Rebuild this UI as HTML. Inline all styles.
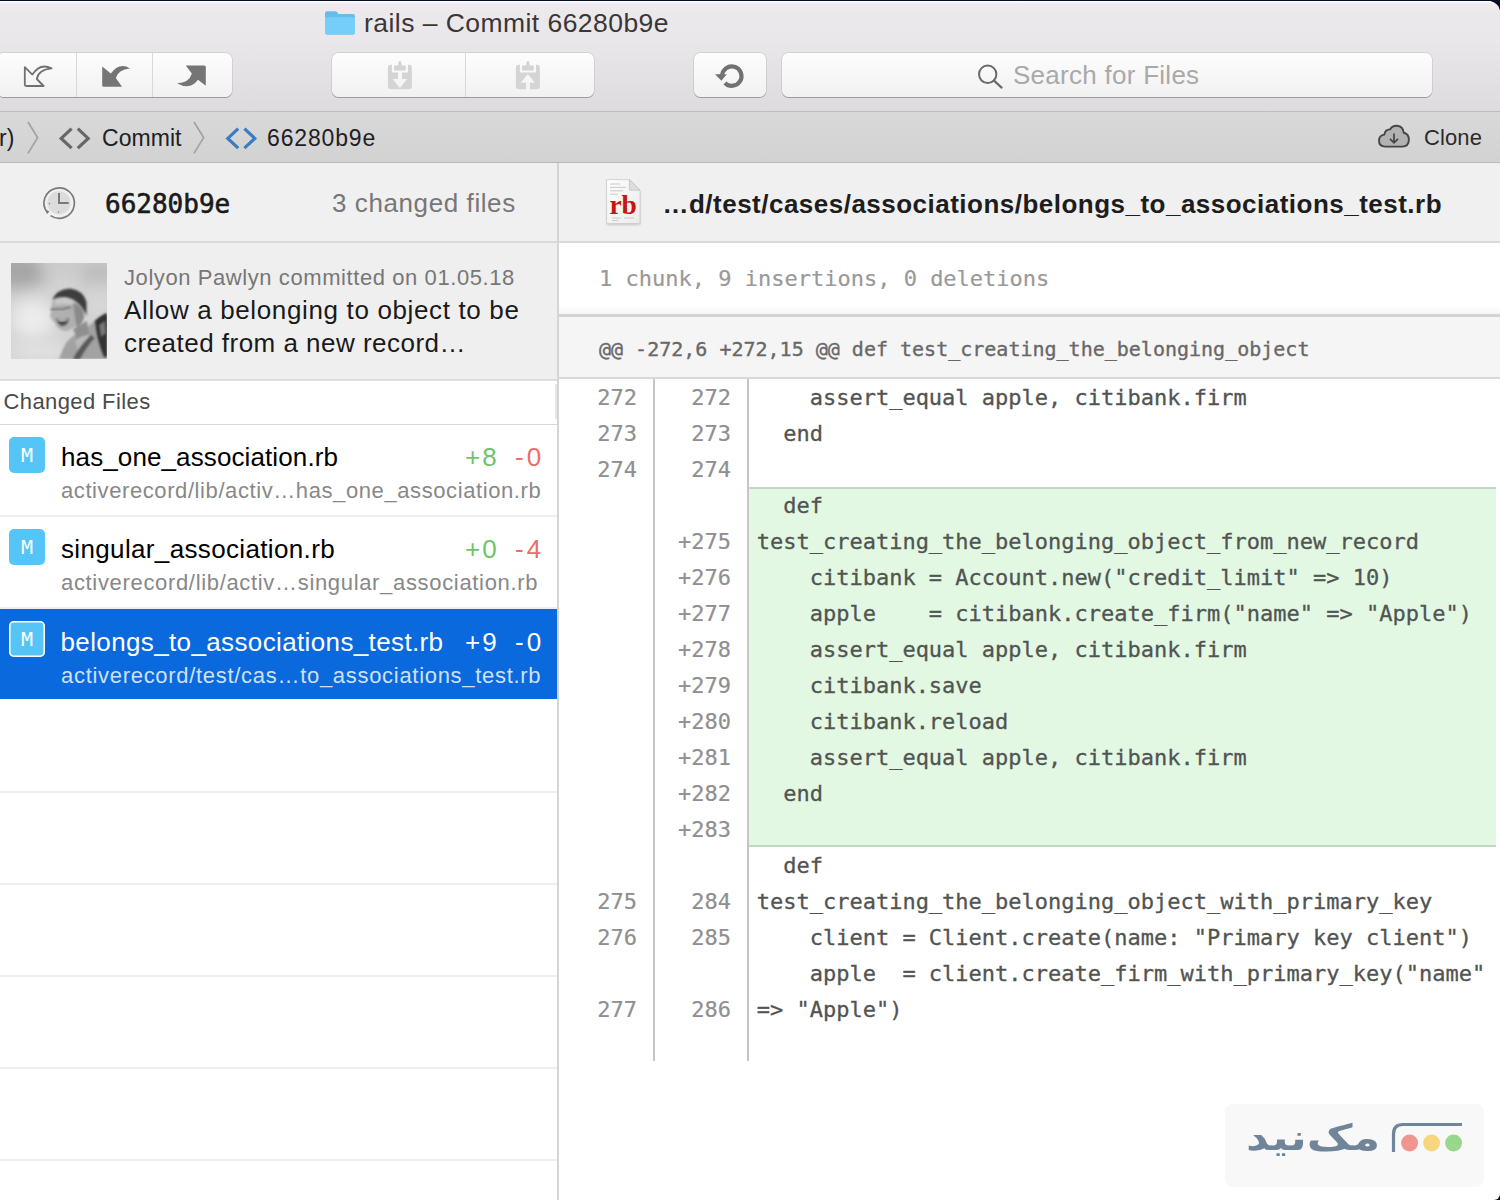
<!DOCTYPE html>
<html lang="en">
<head>
<meta charset="utf-8">
<title>rails – Commit 66280b9e</title>
<style>
*{box-sizing:border-box;margin:0;padding:0}
html,body{width:1500px;height:1200px;overflow:hidden;background:#070e24}
body{position:relative;font-family:"Liberation Sans",sans-serif;color:#222}
.abs{position:absolute}
.t{position:absolute;white-space:pre;line-height:1}
.mono{font-family:"DejaVu Sans Mono","Liberation Mono",monospace}
#win{position:absolute;left:0;top:1px;width:1500px;height:1199px;background:#fff;border-radius:0 12px 6px 0;overflow:hidden}
#chrome{position:absolute;left:0;top:1px;width:1500px;height:110px;background:linear-gradient(#fff 0,#fff 1px,#eeeef6 2px,#f0eaec 5px,#ece9ec 10px,#e9e7e9 40px,#dddbdd 110px)}
#chromeline{position:absolute;left:0;top:111px;width:1500px;height:2px;background:linear-gradient(#bfbdbf 50%,#d0ced0 50%)}
#crumb{position:absolute;left:0;top:112px;width:1500px;height:50px;background:linear-gradient(#dad9da,#d3d2d3)}
#crumbline{position:absolute;left:0;top:162px;width:1500px;height:1px;background:#b9b8b9}
.btn{position:absolute;top:53px;height:44px;background:linear-gradient(#fefdfe,#f2f1f2);border-radius:6.5px;box-shadow:0 0 0 .7px rgba(0,0,0,.12),0 .8px .6px rgba(0,0,0,.3)}
.sep{position:absolute;top:0;width:1px;height:44px;background:#d9d7d9}
.badge{width:36px;height:36px;border-radius:5px;background:#54c5f6;color:#fff;font-size:20px;line-height:36px;text-align:center}
.ln{position:absolute;width:71px;height:36px;line-height:38px;text-align:right;white-space:pre;font-family:"DejaVu Sans Mono","Liberation Mono",monospace;font-size:22px;color:#8f8f8f;-webkit-text-stroke:.2px #8f8f8f}
.cd{position:absolute;left:756.7px;height:36px;line-height:38px;white-space:pre;font-family:"DejaVu Sans Mono","Liberation Mono",monospace;font-size:22px;color:#515452;-webkit-text-stroke:.3px #515452}
</style>
</head>
<body>
<div id="win"><div id="inner" class="abs" style="left:0;top:-1px;width:1500px;height:1200px">
<div id="chrome"></div>
<div id="chromeline"></div>
<div id="crumb"></div>
<div id="crumbline"></div>
<!--TOOLBAR-->
<svg class="abs" style="left:324px;top:10px" width="32" height="26" viewBox="0 0 32 26">
<path d="M1 3.2 Q1 1.2 3 1.2 L11.2 1.2 Q12.6 1.2 13.4 2.4 L14.6 4 L29 4 Q31 4 31 6 L31 22.6 Q31 24.6 29 24.6 L3 24.6 Q1 24.6 1 22.6 Z" fill="#69bcea"/>
<path d="M1 7.2 L31 7.2 L31 22.6 Q31 24.6 29 24.6 L3 24.6 Q1 24.6 1 22.6 Z" fill="#74cef9"/>
</svg>
<div class="t" style="left:364px;top:10px;font-size:26.5px;letter-spacing:.45px;color:#3a3636">rails – Commit 66280b9e</div>
<div class="btn" style="left:-3px;width:235px">
<div class="sep" style="left:79px"></div><div class="sep" style="left:155px"></div>
</div>
<svg class="abs" style="left:0;top:52px" width="240" height="46" viewBox="0 52 240 46">
<path d="M24.8 67.2 L24.8 84.5 Q24.8 86 26.3 86 L43.6 86 L36.8 79 Q38.5 69.5 51.6 68.4 Q40 62.5 32.4 74.6 Z" fill="none" stroke="#707070" stroke-width="1.8" stroke-linejoin="round"/>
<path d="M102.2 66.6 L102.2 85.3 Q102.2 86.8 103.7 86.8 L122 86.8 L115.8 78 Q118 69.6 130 68.4 Q119.5 62 110.8 73.6 Z" fill="#757575"/>
<path d="M185.8 65.4 L204.3 65.4 Q205.8 65.4 205.8 66.9 L205.8 85.8 L198 79.8 Q190 90.6 177 83.2 Q189.4 82.6 191.8 73.4 Z" fill="#757575"/>
</svg>
<div class="btn" style="left:332px;width:262px"><div class="sep" style="left:133px"></div></div>
<svg class="abs" style="left:380px;top:52px" width="170" height="46" viewBox="380 52 170 46">
<g fill="#d5d4d5">
<path d="M390.9 64.7 L391.9 64.7 L391.9 72.4 L398 72.4 L398 79 L392.6 79 L399.9 88 L407.1 79 L402 79 L402 72.4 L408 72.4 L408 64.7 L408.9 64.7 Q411.9 64.7 411.9 67.7 L411.9 86.3 Q411.9 89.3 408.9 89.3 L390.9 89.3 Q387.9 89.3 387.9 86.3 L387.9 67.7 Q387.9 64.7 390.9 64.7 Z"/>
<path d="M394 65.5 L398.3 65.5 L398.3 62.5 Q398.3 61 399.9 61 Q401.5 61 401.5 62.5 L401.5 65.5 L405.7 65.5 L405.7 70.6 L394 70.6 Z"/>
<path d="M518.9 64.7 L519.9 64.7 L519.9 72.4 L536 72.4 L536 64.7 L536.9 64.7 Q539.9 64.7 539.9 67.7 L539.9 86.3 Q539.9 89.3 536.9 89.3 L530 89.3 L530 82.7 L534.9 82.7 L527.9 74.1 L520.6 82.7 L526 82.7 L526 89.3 L518.9 89.3 Q515.9 89.3 515.9 86.3 L515.9 67.7 Q515.9 64.7 518.9 64.7 Z"/>
<path d="M522 65.5 L526.3 65.5 L526.3 62.5 Q526.3 61 527.9 61 Q529.5 61 529.5 62.5 L529.5 65.5 L533.7 65.5 L533.7 70.6 L522 70.6 Z"/>
</g>
</svg>
<div class="btn" style="left:694px;width:72px"></div>
<svg class="abs" style="left:700px;top:52px" width="60" height="46" viewBox="700 52 60 46">
<path d="M722.1 76 A9.7 9.7 0 1 1 724.9 82.9" fill="none" stroke="#717171" stroke-width="4.2"/>
<path d="M715 74.2 L726.8 74.2 L721.4 80.8 Z" fill="#717171"/>
</svg>
<div class="btn" style="left:782px;width:650px"></div>
<svg class="abs" style="left:975px;top:62px" width="32" height="30" viewBox="975 62 32 30">
<circle cx="987.7" cy="74.3" r="8.7" fill="none" stroke="#6a6a6a" stroke-width="2"/>
<path d="M994 80.6 L1001.6 87.6" stroke="#6a6a6a" stroke-width="2.2" stroke-linecap="round"/>
</svg>
<div class="t" style="left:1013px;top:62px;font-size:26px;letter-spacing:.27px;color:#a9a9a9">Search for Files</div>
<!--CRUMBS-->
<div class="t" style="left:-1px;top:127px;font-size:23px;color:#202024">r)</div>
<svg class="abs" style="left:20px;top:116px" width="250" height="44" viewBox="20 116 250 44">
<path d="M28 122 L37.6 137.6 L28 153.4" fill="none" stroke="#a4a3a4" stroke-width="1.8"/>
<path d="M194 122 L203.6 137.6 L194 153.4" fill="none" stroke="#a4a3a4" stroke-width="1.8"/>
<path d="M71.6 128.6 L61.2 138.4 L71.6 148.2 M77.8 128.6 L88.2 138.4 L77.8 148.2" fill="none" stroke="#676767" stroke-width="3.2"/>
<path d="M238.2 128.6 L227.8 138.4 L238.2 148.2 M244.4 128.6 L254.8 138.4 L244.4 148.2" fill="none" stroke="#3a7cc3" stroke-width="3.2"/>
</svg>
<div class="t" style="left:102px;top:127px;font-size:23px;letter-spacing:.05px;color:#202024">Commit</div>
<div class="t" style="left:267px;top:127px;font-size:23px;letter-spacing:.84px;color:#202024">66280b9e</div>
<svg class="abs" style="left:1374px;top:120px" width="40" height="32" viewBox="1374 120 40 32">
<path d="M1385.2 146.6 Q1379 146.6 1379 140.6 Q1379 135.4 1384.4 134.6 Q1385 129.6 1390 129.4 Q1392.4 125.6 1397 125.8 Q1403 126.4 1403.8 132.8 Q1409 134 1408.9 140 Q1408.6 146.6 1402.4 146.6 Z" fill="#b3b2b3" stroke="#454545" stroke-width="1.9" stroke-linejoin="round"/>
<path d="M1394 133.6 L1394 142.4 M1390 138.8 L1394 142.8 L1398 138.8" fill="none" stroke="#454545" stroke-width="1.7"/>
</svg>
<div class="t" style="left:1424px;top:127px;font-size:22px;letter-spacing:.1px;color:#2b2b2b">Clone</div>
<!--LEFT-->
<div class="abs" style="left:0;top:163px;width:1500px;height:78px;background:#f0f0f0"></div>
<div class="abs" style="left:0;top:241px;width:1500px;height:2px;background:#dadada"></div>
<div class="abs" style="left:0;top:243px;width:557px;height:136px;background:#efefef"></div>
<div class="abs" style="left:0;top:379px;width:557px;height:2px;background:linear-gradient(#d6d6d6,#e6e6e6)"></div>
<div class="abs" style="left:555px;top:384px;width:2px;height:35px;background:#e6e6e6"></div>
<svg class="abs" style="left:40px;top:184px" width="38" height="38" viewBox="40 184 38 38">
<circle cx="59" cy="202.9" r="11.6" fill="#dcdcdc"/>
<path d="M50.6 215.6 A15.2 15.2 0 1 0 47.2 212.4" fill="none" stroke="#7a7a7a" stroke-width="1.7"/>
<path d="M45.9 209.6 L49.4 211.6 L47 214.2 Z" fill="#7a7a7a"/>
<path d="M59 193.1 L59 202.9 L68.7 202.9" fill="none" stroke="#7a7a7a" stroke-width="2"/>
<circle cx="49.5" cy="203.6" r=".8" fill="#888"/><circle cx="58.6" cy="212" r=".8" fill="#888"/>
</svg>
<div class="t mono" style="left:105px;top:191px;font-size:26px;color:#1a1a1a;-webkit-text-stroke:.6px #1a1a1a">66280b9e</div>
<div class="t" style="left:332px;top:190px;font-size:26px;letter-spacing:.59px;color:#777">3 changed files</div>
<svg class="abs" style="left:11px;top:263px" width="96" height="96" viewBox="0 0 96 96">
<defs>
<filter id="b3" x="-30%" y="-30%" width="160%" height="160%"><feGaussianBlur stdDeviation="3"/></filter>
<filter id="b1" x="-30%" y="-30%" width="160%" height="160%"><feGaussianBlur stdDeviation="1.2"/></filter>
<filter id="b8" x="-50%" y="-50%" width="200%" height="200%"><feGaussianBlur stdDeviation="8"/></filter>
<clipPath id="av"><rect width="96" height="96"/></clipPath>
</defs>
<g clip-path="url(#av)">
<rect width="96" height="96" fill="#d2d2d2"/>
<ellipse cx="6" cy="8" rx="30" ry="18" fill="#a6a6a6" filter="url(#b8)"/>
<ellipse cx="52" cy="2" rx="22" ry="8" fill="#c9c9c9" filter="url(#b8)"/>
<ellipse cx="88" cy="10" rx="20" ry="14" fill="#bdbdbd" filter="url(#b8)"/>
<ellipse cx="22" cy="56" rx="22" ry="20" fill="#ececec" filter="url(#b8)"/>
<ellipse cx="28" cy="88" rx="32" ry="10" fill="#e2e2e2" filter="url(#b8)"/>
<ellipse cx="88" cy="40" rx="10" ry="14" fill="#d8d8d8" filter="url(#b8)"/>
<path d="M48 96 L52 86 Q56 76 64 72 L74 66 L86 56 L96 51 L96 96 Z" fill="#a2a2a2" filter="url(#b1)"/>
<path d="M62 66 L76 58 L78 72 L68 80 Z" fill="#8f8f8f" filter="url(#b1)"/>
<path d="M64 78 Q70 72 78 72 L82 78 Q74 80 68 90 Z" fill="#b9b9b9" filter="url(#b1)"/>
<path d="M84 58 Q90 52 96 50 L96 94 L93 94 Q86 78 84 58 Z" fill="#303030" filter="url(#b1)"/>
<path d="M88 62 L94 58 L95 70 L90 74 Z" fill="#777" filter="url(#b1)"/>
<path d="M62 96 Q68 84 80 72 L83.5 75 Q74 86 69 96 Z" fill="#595959" filter="url(#b1)"/>
<path d="M41 40 Q40 50 39 53 Q41 58 44 60 Q46 66 53 68 Q60 68 66 62 Q74 54 74 44 Q70 32 58 30 Q46 31 41 40 Z" fill="#b0b0b0" filter="url(#b1)"/>
<path d="M44 36 Q52 32 62 35 L64 42 Q54 40 44 42 Z" fill="#c8c8c8" filter="url(#b1)"/>
<path d="M62 40 Q72 42 73 54 Q71 62 66 66 Q64 54 62 40 Z" fill="#8a8a8a" filter="url(#b1)"/>
<path d="M41 37 Q45 26.5 59 25.5 Q72 27 75.5 39 L75.5 53 Q72 44 67 40 Q62 35 54 34 Q46 33.5 41 37 Z" fill="#3d3d3d" filter="url(#b1)"/>
<path d="M39.5 46.5 L52 46 L60 44" fill="none" stroke="#6a6a6a" stroke-width="1.6" filter="url(#b1)"/>
<path d="M45 55 Q51 60 58 55 Q57 63 51 63 Q47 62 45 55 Z" fill="#505050" filter="url(#b1)"/>
<path d="M46.5 56.5 Q51 59 56.5 56.5" fill="none" stroke="#d8d8d8" stroke-width="1.3" filter="url(#b1)"/>
</g>
</svg>
<div class="t" style="left:124px;top:267px;font-size:22px;letter-spacing:.58px;color:#777">Jolyon Pawlyn committed on 01.05.18</div>
<div class="t" style="left:124px;top:297px;font-size:26px;letter-spacing:.64px;color:#1a1a1a">Allow a belonging to object to be</div>
<div class="t" style="left:124px;top:330px;font-size:26px;letter-spacing:.48px;color:#1a1a1a">created from a new record…</div>
<div class="t" style="left:3.5px;top:391px;font-size:22px;letter-spacing:.4px;color:#4a4a4a">Changed Files</div>
<div class="abs" style="left:0;top:424px;width:557px;height:1px;background:#d8d8d8"></div>
<div class="abs" style="left:0;top:515px;width:557px;height:2px;background:#eee"></div>
<div class="abs" style="left:0;top:607px;width:557px;height:2px;background:#eee"></div>
<div class="abs" style="left:0;top:609px;width:557px;height:90px;background:#0a69dd"></div>
<div class="abs" style="left:0;top:791px;width:557px;height:2px;background:#efefef"></div>
<div class="abs" style="left:0;top:883px;width:557px;height:2px;background:#efefef"></div>
<div class="abs" style="left:0;top:975px;width:557px;height:2px;background:#efefef"></div>
<div class="abs" style="left:0;top:1067px;width:557px;height:2px;background:#efefef"></div>
<div class="abs" style="left:0;top:1159px;width:557px;height:2px;background:#efefef"></div>
<div class="abs badge" style="left:9px;top:437px"><span class="mono">M</span></div>
<div class="t" style="left:61px;top:444px;font-size:26px;letter-spacing:.11px;color:#000">has_one_association.rb</div>
<div class="t" style="left:465px;top:444px;font-size:26px;letter-spacing:2px;color:#6fc36c">+8</div>
<div class="t" style="left:515px;top:444px;font-size:26px;letter-spacing:3px;color:#ef6c6a">-0</div>
<div class="t" style="left:61px;top:480px;font-size:22px;letter-spacing:.59px;color:#888">activerecord/lib/activ…has_one_association.rb</div>
<div class="abs badge" style="left:9px;top:529px"><span class="mono">M</span></div>
<div class="t" style="left:61px;top:536px;font-size:26px;letter-spacing:.35px;color:#000">singular_association.rb</div>
<div class="t" style="left:465px;top:536px;font-size:26px;letter-spacing:2px;color:#6fc36c">+0</div>
<div class="t" style="left:515px;top:536px;font-size:26px;letter-spacing:3px;color:#ef6c6a">-4</div>
<div class="t" style="left:61px;top:572px;font-size:22px;letter-spacing:.67px;color:#888">activerecord/lib/activ…singular_association.rb</div>
<div class="abs badge" style="left:9px;top:621px;box-shadow:inset 0 0 0 1.6px #fff"><span class="mono">M</span></div>
<div class="t" style="left:60.5px;top:629px;font-size:26px;letter-spacing:.37px;color:#fff">belongs_to_associations_test.rb</div>
<div class="t" style="left:465px;top:629px;font-size:26px;letter-spacing:2px;color:#fff">+9</div>
<div class="t" style="left:515px;top:629px;font-size:26px;letter-spacing:3px;color:#fff">-0</div>
<div class="t" style="left:61px;top:665px;font-size:22px;letter-spacing:.7px;color:#cfe0f7">activerecord/test/cas…to_associations_test.rb</div>
<div class="abs" style="left:557px;top:163px;width:2px;height:1037px;background:#d5d5d5"></div>
<!--RIGHT-->
<svg class="abs" style="left:602px;top:176px" width="44" height="52" viewBox="602 176 44 52">
<defs><linearGradient id="pg" x1="0" y1="0" x2="1" y2="1"><stop offset="0" stop-color="#fdfdfd"/><stop offset="1" stop-color="#ececec"/></linearGradient>
<filter id="ds" x="-20%" y="-20%" width="140%" height="140%"><feGaussianBlur stdDeviation="0.9"/></filter></defs>
<path d="M607 180.5 L629 180.5 L640 191.5 L640 224 L607 224 Z" fill="#9a9a9a" opacity=".55" filter="url(#ds)" transform="translate(0 .8)"/>
<path d="M606.6 179.6 L629.4 179.6 L640 190.2 L640 223.6 L606.6 223.6 Z" fill="url(#pg)" stroke="#c9c9c9" stroke-width=".8"/>
<path d="M629.4 179.6 L629.4 190.2 L640 190.2 Z" fill="#dedede" stroke="#bdbdbd" stroke-width=".7"/>
<g stroke="#c4c4c4" stroke-width=".9"><path d="M610 184h10M610 187.4h16M610 190.8h13M610 194.2h8M612 218h9M624 218h10M612 220.6h6"/></g>
</svg>
<div class="t" style="left:609.5px;top:191.4px;font-family:'Liberation Serif',serif;font-weight:700;font-size:27.5px;letter-spacing:-.3px;color:#c8150f">rb</div>
<div class="t" style="left:662.5px;top:191px;font-size:26px;font-weight:700;letter-spacing:.485px;color:#1d1d1d">…d/test/cases/associations/belongs_to_associations_test.rb</div>
<div class="abs" style="left:559px;top:304px;width:941px;height:10px;background:linear-gradient(rgba(0,0,0,0),rgba(0,0,0,.035))"></div>
<div class="abs" style="left:559px;top:314px;width:941px;height:3px;background:#d3d3d3"></div>
<div class="abs" style="left:559px;top:317px;width:941px;height:60px;background:#f5f5f5"></div>
<div class="abs" style="left:559px;top:377px;width:941px;height:2px;background:#d9d9d9"></div>
<div class="t mono" style="left:599px;top:267.5px;font-size:22px;color:#999;-webkit-text-stroke:.2px #999">1 chunk, 9 insertions, 0 deletions</div>
<div class="t mono" style="left:599px;top:339px;font-size:20px;color:#686868;-webkit-text-stroke:.35px #686868">@@ -272,6 +272,15 @@ def test_creating_the_belonging_object</div>
<div class="abs" style="left:748px;top:487px;width:748px;height:360px;background:#e2f8e3;border-top:2px solid #c0d7c4;border-bottom:2px solid #c0d7c4"></div>
<div class="abs" style="left:653px;top:379px;width:2px;height:682px;background:#c6c6c6"></div>
<div class="abs" style="left:747px;top:379px;width:2px;height:682px;background:#c6c6c6"></div>
<div class="ln" style="left:566px;top:379px">272</div>
<div class="ln" style="left:660px;top:379px">272</div>
<div class="cd" style="top:379px">    assert_equal apple, citibank.firm</div>
<div class="ln" style="left:566px;top:415px">273</div>
<div class="ln" style="left:660px;top:415px">273</div>
<div class="cd" style="top:415px">  end</div>
<div class="ln" style="left:566px;top:451px">274</div>
<div class="ln" style="left:660px;top:451px">274</div>
<div class="cd" style="top:487px">  def</div>
<div class="ln" style="left:660px;top:523px">+275</div>
<div class="cd" style="top:523px">test_creating_the_belonging_object_from_new_record</div>
<div class="ln" style="left:660px;top:559px">+276</div>
<div class="cd" style="top:559px">    citibank = Account.new("credit_limit" =&gt; 10)</div>
<div class="ln" style="left:660px;top:595px">+277</div>
<div class="cd" style="top:595px">    apple    = citibank.create_firm("name" =&gt; "Apple")</div>
<div class="ln" style="left:660px;top:631px">+278</div>
<div class="cd" style="top:631px">    assert_equal apple, citibank.firm</div>
<div class="ln" style="left:660px;top:667px">+279</div>
<div class="cd" style="top:667px">    citibank.save</div>
<div class="ln" style="left:660px;top:703px">+280</div>
<div class="cd" style="top:703px">    citibank.reload</div>
<div class="ln" style="left:660px;top:739px">+281</div>
<div class="cd" style="top:739px">    assert_equal apple, citibank.firm</div>
<div class="ln" style="left:660px;top:775px">+282</div>
<div class="cd" style="top:775px">  end</div>
<div class="ln" style="left:660px;top:811px">+283</div>
<div class="cd" style="top:847px">  def</div>
<div class="ln" style="left:566px;top:883px">275</div>
<div class="ln" style="left:660px;top:883px">284</div>
<div class="cd" style="top:883px">test_creating_the_belonging_object_with_primary_key</div>
<div class="ln" style="left:566px;top:919px">276</div>
<div class="ln" style="left:660px;top:919px">285</div>
<div class="cd" style="top:919px">    client = Client.create(name: "Primary key client")</div>
<div class="cd" style="top:955px">    apple  = client.create_firm_with_primary_key("name"</div>
<div class="ln" style="left:566px;top:991px">277</div>
<div class="ln" style="left:660px;top:991px">286</div>
<div class="cd" style="top:991px">=&gt; "Apple")</div>
<!--WATERMARK-->
<div class="abs" style="left:1225px;top:1104px;width:259px;height:83px;border-radius:8px;background:#f8f8f8"></div>
<svg class="abs" style="left:1385px;top:1115px" width="90" height="46" viewBox="1385 1115 90 46">
<path d="M1393.5 1152 L1393.5 1134 Q1393.5 1124.5 1403 1124.5 L1462 1124.5" fill="none" stroke="#70859a" stroke-width="3.2"/>
<circle cx="1409.6" cy="1143" r="8.5" fill="#f0968f"/>
<circle cx="1431.6" cy="1143" r="8.5" fill="#f8d680"/>
<circle cx="1453.6" cy="1143" r="8.5" fill="#98d78c"/>
</svg>
<div id="wmt" class="t" dir="rtl" lang="fa" style="left:1246px;top:1120px;font-family:'DejaVu Sans',sans-serif;font-weight:700;font-size:36px;color:#70859a;transform-origin:0 0;transform:scaleX(1.24)">مک‌نید</div>
</div></div>
</body>
</html>
